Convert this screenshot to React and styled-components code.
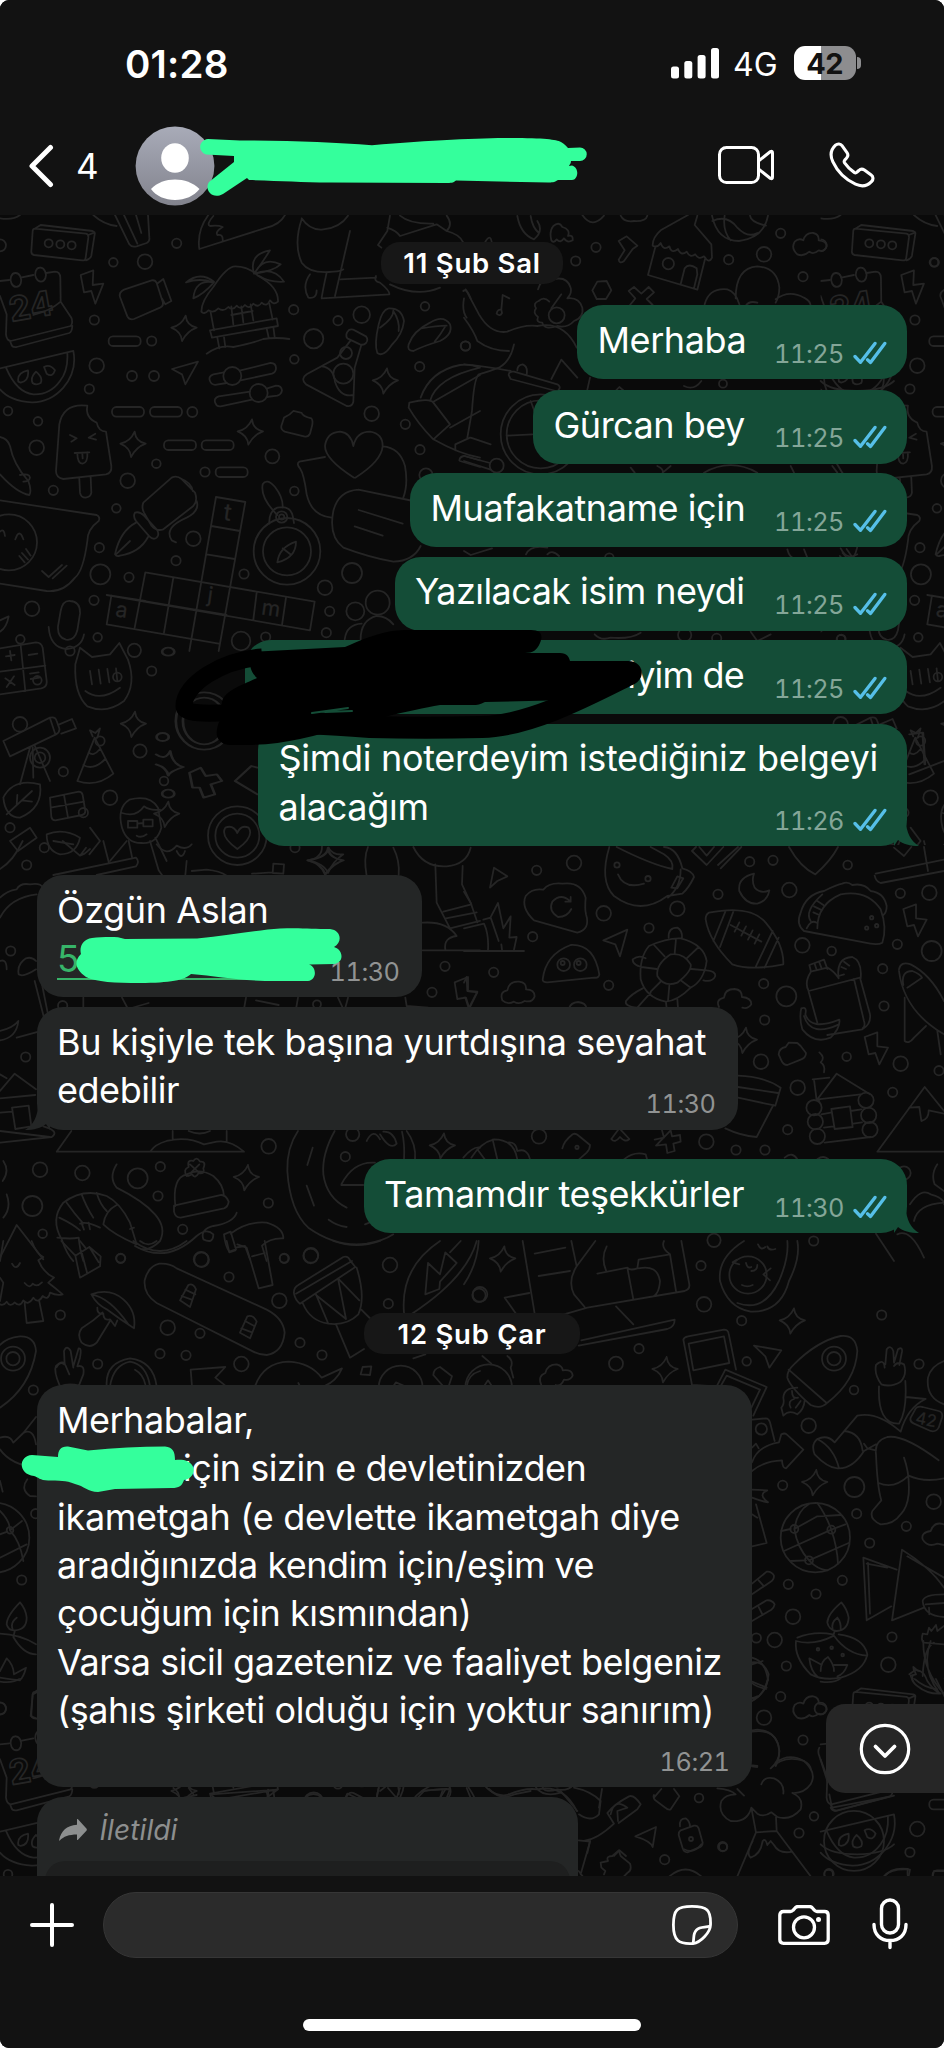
import React from 'react'

import styled, { createGlobalStyle, css } from 'styled-components'

const GREEN = '#34ff9c'

const GlobalStyle = createGlobalStyle`
    body {
        margin: 0;
        background: #fff;
    }
`

// Every zone holds doodles in thirds of a pixel, measured from its own corner
const zones = [
    {
        x: 0,
        y: 210,
        dots: [
            [340, 154, 13], [435, 152, 22], [530, 97, 14], [283, 327, 14], [455, 390, 14], [396, 495, 15], [462, 495, 15],
            [290, 464, 22], [268, 534, 14], [24, 600, 13], [114, 631, 13], [110, 710, 22], [577, 603, 15], [469, 758, 13],
            [383, 809, 22], [160, 838, 14], [615, 783, 14], [817, 736, 21], [883, 840, 13], [349, 892, 13], [580, 983, 22],
            [298, 1010, 14], [528, 1049, 14], [301, 1090, 30], [387, 1099, 14], [732, 1089, 14], [282, 1168, 14],
            [96, 1193, 22], [61, 1285, 13], [293, 1279, 13], [403, 1318, 20], [723, 1290, 28], [797, 1278, 14],
            [881, 296, 14], [1014, 329, 14], [1085, 311, 25], [941, 383, 29], [883, 445, 13], [1115, 608, 22],
            [1216, 640, 14], [1260, 716, 14], [1259, 467, 14], [1275, 286, 13], [1397, 405, 14], [1278, 792, 20],
            [975, 1130, 22], [1056, 1086, 30], [989, 1201, 14], [979, 1265, 14], [0, 103, 18],
            [146, 97, 12], [181, 100, 12], [215, 103, 12], [697, 495, 27], [776, 546, 27], [1038, 426, 18], [1030, 488, 30],
            [861, 1021, 100], [861, 1021, 72], [845, 918, 17], [845, 918, 8], [27, 994, 84], [1133, 1175, 36], [1066, 1201, 27],
        ],
        stars: [[552, 352], [399, 700], [751, 663], [1156, 510]],
        pills: [[326, 376], [336, 588], [450, 588], [492, 688], [605, 688], [647, 769]],
        paths: [
            // radio
            'M104 53 L258 68 Q266 70 265 80 L257 140 Q256 150 246 148 L102 132 Q93 130 94 120 L98 60 Q99 53 104 53 M104 53 L122 42 L278 60 Q286 62 284 70 L274 134 Q272 142 258 148 M265 72 L284 64',
            // racket and wing along the top edge
            'M280 12 Q310 40 350 45 M345 12 L388 100 Q395 110 410 106 L440 96 Q450 90 448 80 L444 12 M372 12 L412 98 M408 12 L424 66',
            'M855 12 Q840 40 800 50 L598 114 Q590 60 625 12 M640 15 Q618 40 630 45 Q655 42 668 48 Q645 62 652 72 Q670 68 668 90',
            'M0 22 Q40 28 60 12',
            // calendar
            'M0 210 L28 207 M62 200 L100 192 M138 186 L165 182 Q180 182 181 200 L182 272 L214 320 Q220 335 212 345 L32 390 Q20 388 18 370 L20 310 L0 255 M30 390 L34 400 Q36 410 50 408 L208 366 Q216 362 217 345 M182 272 Q150 300 100 312',
            'M46 186 a16 21 -8 1 0 1 0 M120 170 a16 21 -8 1 0 1 0',
            // bolt, camcorder
            'M242 192 L280 178 L278 222 L310 218 L286 278 L274 240 L252 244 Z',
            'M372 236 L455 208 Q466 206 470 216 L488 272 Q492 284 480 290 L402 324 Q388 328 382 316 L360 258 Q356 244 372 236 M474 216 L490 204 L514 270 L496 280 L486 262',
            // beach hut with palms
            'M604 302 Q604 270 640 228 Q680 166 706 166 Q745 166 775 195 Q836 228 834 272 Q820 284 810 268 Q800 290 785 275 Q775 292 760 278 Q748 296 735 282 Q722 298 710 284 Q698 300 685 288 Q670 304 655 292 Q640 308 625 298 Q612 312 604 302',
            'M632 304 L642 358 M694 286 L700 340 M808 278 L818 326 M630 358 L830 322 L834 345 L636 380 Z M652 380 L658 412 M672 378 L676 408 M800 352 L806 380 M820 348 L824 378 M620 428 Q660 400 700 408 Q760 396 790 384 Q830 378 868 384 M724 286 L730 334 M752 280 L760 328 M694 312 L758 300',
            'M642 212 Q600 180 558 214 Q600 200 640 214 Q585 205 580 262 Q610 250 642 214 M762 188 Q745 130 810 118 Q790 150 764 186 Q790 135 842 160 Q820 180 764 188 Q820 165 852 212 Q810 215 776 194',
            // watermelon
            'M0 472 L220 420 Q232 480 190 530 Q150 575 95 574 Q30 570 0 535 M18 470 Q50 545 100 550 Q150 552 180 510 Q205 478 202 426 M55 512 Q50 485 84 478 Q88 510 62 515 Z M98 516 Q90 500 108 482 Q130 500 122 516 Q108 524 98 516 M132 468 Q150 458 165 478 Q158 500 140 488 Z',
            // paper plane, sliders
            'M516 474 L594 452 L556 520 L546 490 Z',
            'M672 484 L640 490 Q624 496 630 510 Q636 524 650 521 L680 516 M722 478 L812 456 Q828 456 828 472 Q828 484 816 488 L722 508 M750 542 L656 556 Q640 562 646 576 Q650 588 662 586 L756 566 M802 532 L828 524 Q844 524 846 538 Q844 550 832 554 L800 558',
            // flask, slippers
            'M1046 358 Q1054 352 1064 358 L1098 376 Q1106 386 1098 396 Q1090 404 1080 400 L1042 382 Q1034 370 1046 358 M1052 388 L1012 440 L920 490 Q900 504 918 520 L1040 585 Q1056 588 1060 572 L1064 470 L1084 402 M966 466 Q1000 470 1005 512 Q1020 560 1060 552',
            'M1166 292 Q1205 290 1212 330 Q1208 370 1175 402 Q1150 440 1132 426 Q1122 400 1136 340 Q1146 296 1166 292 M1180 298 Q1182 320 1140 350 M1180 300 Q1200 330 1196 360 M1226 400 Q1240 360 1290 335 Q1330 310 1350 340 Q1360 370 1320 390 Q1270 405 1240 420 Q1220 420 1226 400 M1340 344 Q1310 345 1264 352 M1336 346 Q1322 370 1304 392',
            // ice lolly
            'M262 584 Q190 575 178 640 L168 780 Q168 800 190 804 L318 790 Q336 786 334 765 L318 662 Q296 662 290 635 Q255 620 262 584 M238 804 L240 845 Q242 860 257 860 Q272 858 274 845 L272 798 M210 672 L230 682 L214 692 M286 668 L266 680 L288 686 M224 726 L268 724 M232 726 Q232 758 248 758 Q264 755 262 724 M247 728 L248 742',
            // chilli
            'M0 678 Q22 682 30 705 Q40 760 85 810 Q96 840 88 852 Q50 845 0 790 M60 792 Q88 786 90 800 Q88 812 70 812',
            // cube
            'M852 620 Q870 612 880 600 L905 606 Q908 616 934 622 Q940 630 936 645 L930 668 Q924 680 912 676 L854 662 Q842 656 844 645 Z',
            // hearts and bubbles
            'M975 738 L898 752 Q888 758 900 772 Q912 790 920 850 Q935 915 995 920 M1062 800 Q975 745 975 705 Q980 665 1020 662 Q1052 665 1060 705 Q1070 662 1110 662 Q1148 668 1148 705 Q1145 750 1066 800 M1148 706 Q1200 710 1215 765 Q1225 820 1210 860',
            'M1075 836 L1240 870 M1075 836 Q1015 840 1000 900 Q985 975 1030 1010 Q1110 1040 1180 1052 Q1240 1050 1262 1005 M1076 897 L1208 938 M1064 946 L1148 974',
            // fountain pen
            'M430 875 L515 800 Q530 792 545 804 L585 845 Q594 870 580 885 L490 955 Q470 962 455 945 L432 905 Q424 890 430 875 M405 905 Q418 900 432 914 L470 955 Q480 970 470 980 Q460 988 448 976 L408 930 Q398 915 405 905 M408 935 Q360 960 345 1030 Q350 1038 360 1034 Q420 1024 444 978 M348 1030 L390 990 M545 804 Q575 815 578 840 M590 870 Q600 900 560 920 Q490 950 515 988 L528 994',
            // crossword
            'M648 858 L736 873 L656 1320 M648 858 L568 1320 M634 945 L720 960 M620 1030 L704 1044 M436 1084 L944 1172 L930 1258 L320 1152 M436 1084 L404 1250 M520 1100 L492 1265 M334 1154 L320 1240 L656 1298 M320 1240 L334 1154 L420 1168 M420 1168 L680 1212 M770 1145 L760 1226 M858 1160 L846 1242 M334 1154 L436 1170',
            // compass
            'M832 912 Q780 860 788 820 Q800 800 825 828 Q850 860 848 890 M808 938 Q806 900 832 890 Q875 880 880 925 L882 936 M832 1054 Q838 1008 888 992 Q888 1040 832 1054 M848 1012 L874 1032',
            // speech bubble with a laughing face
            'M0 868 L290 912 Q302 918 296 930 Q262 955 262 990 Q250 1080 225 1100 Q190 1145 140 1140 L0 1118 M0 962 Q12 950 15 975 M46 985 Q58 950 70 985 M58 1035 L74 1054 M66 1026 L84 1046 M78 1014 L92 1034 M126 1080 L146 1098 L186 1062 M158 1102 L200 1064',
            // microphone
            'M210 1170 Q242 1172 240 1208 L232 1258 Q224 1290 198 1286 Q172 1280 174 1246 L182 1200 Q188 1168 210 1170 M146 1248 Q150 1310 200 1314 Q245 1310 252 1270 M0 1228 L26 1216 Q20 1250 0 1262',
            // motor bike
            'M1228 575 Q1290 560 1300 575 L1350 640 L1300 685 Q1255 640 1226 590 Z M1262 560 Q1290 480 1380 462 Q1410 458 1440 470 M1290 570 Q1310 500 1440 470 M1300 572 L1440 492 M1350 650 L1440 600 M1300 685 Q1380 730 1440 740 M1378 748 Q1380 735 1395 735 L1440 748 M1380 750 L1440 768 M1366 718 L1366 700 L1410 680',
            // trainers at the top
            'M905 25 Q880 100 905 155 Q930 190 1000 182 Q1025 180 1030 175 M905 22 Q930 60 970 55 Q1020 50 1044 14 M1050 60 L1005 255 M1022 205 L1128 200 M980 185 Q970 230 965 260 M930 190 Q905 225 925 260 Q950 265 950 238 M965 262 L1168 250 Q1170 240 1140 215 Q1120 210 1128 195 M1170 14 L1162 60 L1134 102 L1144 110 M1162 50 Q1190 60 1200 75 L1310 40 L1340 60 Q1360 40 1340 14 M1200 14 Q1230 40 1300 38 M1340 60 Q1380 70 1390 95 M1170 220 Q1250 260 1320 230',
            // people
            'M1034 1285 Q1040 1240 1085 1238 M1082 1290 Q1080 1228 1130 1215 Q1160 1215 1180 1240 M1390 240 Q1400 230 1412 262 M1392 262 Q1385 300 1400 320',
        ],
        labels: [['24', 34, 332, 102, -10], ['t', 668, 926, 70, 8], ['a', 344, 1216, 64, 8], ['j', 620, 1172, 64, 8], ['m', 782, 1210, 64, 8]],
    },
    {
        x: 464,
        y: 210,
        dots: [
            [396, 109, 14], [335, 150, 14], [950, 67, 14], [794, 146, 14], [900, 130, 22], [1017, 197, 14], [777, 518, 12],
            [613, 158, 17], [278, 313, 24], [230, 670, 120], [230, 670, 102], [98, 764, 21], [4, 405, 14], [1412, 154, 13],
            [662, 1272, 20], [758, 1282, 14], [1132, 1284, 13], [436, 1040, 13], [1170, 500, 90],
        ],
        stars: [],
        pills: [],
        paths: [
            'M160 15 Q170 70 210 85 Q240 60 220 30 M200 15 Q205 50 225 66 M262 88 Q255 60 268 45 Q285 30 295 48 Q320 55 312 75 Q328 70 326 88 Q310 98 300 82 Q290 98 278 85 Q268 98 262 88',
            'M355 12 Q385 55 420 14 M470 14 Q480 35 510 30 Q545 32 550 14',
            'M464 90 L488 76 L520 104 L506 114 L480 150 Q466 160 464 146 L482 118 Z',
            'M60 100 Q80 60 84 100 M385 238 L400 212 L428 210 L442 238 L426 264 L398 264 Z',
            // shop
            'M672 12 L590 58 Q565 80 566 104 Q580 112 590 96 Q598 120 616 106 Q622 130 642 114 Q650 136 668 122 Q678 142 694 130 Q704 148 720 136 Q735 160 744 140 L742 100 L692 42 L700 14 M574 108 L552 192 L700 236 L724 140 M650 220 L662 172 Q675 155 698 172 L700 190 L690 232',
            // basketball
            'M744 14 Q760 90 825 90 Q900 80 912 14 M782 14 Q775 60 800 88 M745 30 Q790 10 820 50 Q850 82 880 66 M858 14 Q860 34 906 44',
            // clouds
            'M1000 130 Q980 112 992 92 Q1005 80 1018 88 Q1025 64 1048 66 Q1066 70 1064 88 Q1088 90 1088 106 Q1080 124 1064 118 Q1048 132 1036 122 Q1018 138 1000 130',
            'M722 280 Q735 230 790 235 Q815 242 826 280 M815 262 Q815 170 880 166 Q940 170 946 230 Q946 255 935 275 M935 265 Q975 235 1020 260 Q1040 270 1040 285 M845 285 Q855 268 880 275',
            'M494 240 L510 228 L532 248 L554 228 L570 244 L548 264 L566 282 M494 240 L514 262 L498 282',
            // pine cone and note
            'M222 235 Q230 200 270 204 Q310 196 320 230 Q325 245 310 262 Q345 258 355 290 Q360 320 330 330 Q310 352 280 345 Q240 358 235 335 Q215 335 222 318 Q205 305 216 292 Q206 276 224 270 Q240 255 256 272 M262 292 L292 250',
            'M112 296 L116 252 L136 262 M112 296 Q100 294 98 308 Q108 318 114 306 Z M5 235 L45 310 Q80 370 130 362 Q180 340 220 345 Q300 330 338 410 M0 320 Q30 360 40 390 Q80 420 135 420 M150 400 Q140 450 105 470 Q80 480 45 490 Q30 500 24 600 L10 680',
            'M134 490 Q136 480 150 482 L280 520 Q292 528 284 536 M134 492 L140 504 L276 540 M160 478 Q160 462 176 460 Q192 466 188 490 M262 504 L292 446 L340 500 M378 500 L370 536 M0 460 Q60 465 140 480 M20 680 L80 700 M0 735 L78 756 M0 750 L80 776 M128 674 L205 670 M200 570 L226 640 M0 1020 L20 1032 L84 1012',
            'M186 1030 Q200 1000 250 1010 M250 1030 Q265 1015 285 1035 M1070 510 Q1100 540 1180 540 Q1260 538 1290 510 M450 545 L466 528 L486 545 M660 525 Q690 540 712 510 M500 770 L512 785 M580 765 Q600 775 596 785 L620 765 M720 785 Q800 740 880 785 M980 765 L990 785 M1105 765 L1120 785 M392 1270 Q410 1290 440 1280 Q500 1285 530 1265 M860 1262 L880 1290 L920 1270',
            'M1130 1012 Q1150 1050 1180 1030 M970 1015 Q975 1035 985 1040 M1020 1015 L1030 1040',
        ],
        labels: [],
    },
    {
        x: 0,
        y: 640,
        dots: [
            [352, 108, 13], [112, 118, 13], [210, 30, 14], [300, 300, 14], [420, 330, 20], [60, 250, 22], [190, 392, 14],
            [250, 515, 14], [330, 470, 22], [30, 560, 14], [455, 90, 14], [492, 420, 13], [120, 350, 30], [120, 350, 16],
        ],
        stars: [[400, 250], [500, 520]],
        pills: [],
        paths: [
            // calculator
            'M0 22 L108 4 Q124 4 128 20 L140 120 Q142 138 124 142 L0 160 M0 92 L136 74 M62 12 L76 150 M18 46 L44 42 M30 30 L34 58 M86 42 L112 38 M16 112 L44 132 M42 106 L20 138 M90 98 L116 94 M92 114 L118 110',
            // cat shaped mug
            'M226 70 L240 20 L276 48 L330 40 L358 6 L384 56 Q410 130 372 180 Q320 220 262 196 Q222 160 226 70 M270 90 L276 130 M296 86 L302 128 M322 84 L328 124 M348 82 L352 120 M256 150 Q300 184 360 140',
            // telescope on a stand
            'M10 300 L150 230 Q166 226 170 240 L178 262 Q180 274 168 280 L30 346 Z M150 232 L166 280 M178 250 L216 234 L228 262 L184 278 M90 320 L60 430 M104 314 L150 420 M98 318 L100 410',
            // party hat and ribbon
            'M232 420 L284 290 L340 398 Q290 440 232 420 M250 372 Q280 390 316 354 M266 334 Q280 348 300 324 M278 286 L270 268 L286 276 L300 262 L292 290',
            // leaf and brick
            'M10 470 Q40 410 120 430 Q130 500 60 530 Q16 530 10 470 M20 520 L96 450 M50 492 L52 462 M66 478 L96 482',
            'M150 470 L236 452 Q246 452 248 462 L256 510 Q256 520 246 522 L166 538 Q156 538 154 528 Z M192 462 L204 530 M152 500 L252 482',
            // lad with glasses
            'M366 560 Q350 500 388 476 Q450 460 474 500 L484 560 Q470 610 424 606 Q380 606 366 560 M366 516 Q410 530 432 496 Q450 510 480 506 M384 540 h28 v20 h-28 Z M430 536 h28 v20 h-28 Z M412 548 L430 546 M410 584 Q424 592 440 580 M380 600 L330 660 M466 590 L500 660',
            'M30 600 L90 560 L110 590 L54 630 Z M140 580 Q190 560 240 590 Q230 640 180 640 Q140 630 140 580 M160 600 L220 610 M270 560 L300 600 L268 640',
        ],
        labels: [],
    },
    {
        x: 0,
        y: 840,
        dots: [
            [133, 20, 14], [80, 72, 14], [32, 330, 14], [77, 648, 14], [188, 494, 14], [120, 986, 22], [247, 996, 22],
            [97, 1095, 30], [128, 1178, 13], [413, 1012, 30], [481, 977, 14], [474, 1065, 14], [806, 916, 22], [805, 1086, 14],
            [548, 1165, 14], [1335, 376, 14], [1296, 454, 14], [951, 490, 12], [1036, 947, 14], [1058, 880, 20], [885, 20, 14],
            [603, 1255, 22], [852, 1252, 13], [932, 1245, 22], [362, 1252, 13], [712, -16, 88], [712, -16, 66],
        ],
        stars: [[1327, 915], [739, 1010]],
        pills: [],
        paths: [
            'M68 0 Q40 60 0 84 M160 102 L408 50 Q420 62 408 76 L290 102 M310 0 L326 62 M386 0 L396 48 M188 0 L240 44 L258 20 M240 44 L254 38 L270 24',
            'M450 0 L476 88 L486 102 M470 10 Q500 50 530 14 Q560 30 575 10 M530 30 Q545 60 555 30 M560 60 L556 102 M575 90 L620 86 Q660 90 680 104 M756 98 L816 94 M820 68 L852 70 L850 98 L818 96 Z M712 24 Q660 -14 676 -40 Q700 -50 712 -24 Q722 -50 746 -40 Q764 -14 712 24',
            'M922 58 Q968 52 966 14 M1030 40 Q1000 60 984 96 Q972 66 922 58 M985 20 Q1000 44 1030 40',
            'M0 170 Q20 150 50 145 Q60 125 90 130 Q120 124 130 140 M0 230 Q30 170 110 160 M0 360 Q20 352 20 385 M56 400 Q50 370 78 352 Q95 346 108 360 M56 400 Q70 410 108 385 M0 570 Q40 560 55 540 Q50 590 0 598 M50 590 L116 572 M104 420 L132 530 M124 420 L144 520',
            'M0 750 L44 698 L108 745 M0 772 L106 762 M36 800 L86 794 L94 856 L46 864 Z M0 815 L36 812 M0 870 L150 888 M0 700 L20 712 M0 905 L155 888 Q180 870 130 856 M20 1060 Q35 1100 10 1130 M10 960 Q30 990 8 1020',
            // boots and trees
            'M1104 18 Q1090 50 1100 105 M1180 20 Q1200 60 1196 102 M1240 18 Q1270 80 1340 76 Q1400 70 1412 20 M1306 70 L1310 185 L1350 262 L1440 240 M1388 75 L1386 130 L1414 190 L1330 212 M1338 232 L1430 214 M1268 245 Q1340 240 1370 285 Q1330 290 1336 326 M1268 328 L1440 328',
            'M1364 424 L1404 408 L1404 450 L1432 452 L1406 502 L1396 470 L1372 474 Z M250 470 L250 504 M366 470 L384 504 L446 486 M738 470 L732 504 M768 478 L836 492 M894 470 L888 504 M1014 470 L1028 500 M1036 500 L1044 470 M1216 470 L1220 495 L1284 500',
            'M214 870 L170 932 L732 932 Q690 895 650 902 L612 910 Q560 885 500 900 Q465 910 452 930 M518 870 L518 896 M680 870 L680 902 M566 870 Q600 885 630 870',
            // woolly hat, lamp cord
            'M526 1095 Q516 1010 560 1000 Q600 980 640 1005 Q670 1030 672 1065 M522 1094 L664 1062 Q678 1062 686 1082 Q684 1098 672 1102 L542 1130 Q526 1130 522 1112 Z M560 1005 Q548 985 566 978 Q560 955 580 960 Q590 945 600 962 Q620 960 610 982 Q616 1000 596 996 Q585 1015 576 1000 Q560 1010 560 1000 M570 970 L596 994 M598 970 L572 996',
            'M350 970 Q325 1010 350 1040 Q430 1080 465 1120 Q500 1160 480 1200 Q440 1240 405 1215 M710 1115 Q700 1145 640 1155 Q600 1165 610 1195 Q640 1210 640 1180 Q620 1160 590 1185 Q500 1270 405 1215',
            // shrimp
            'M185 1195 Q150 1135 190 1085 Q250 1040 320 1065 Q360 1085 390 1145 L410 1210 Q340 1180 310 1150 Q315 1110 350 1092 M245 1060 Q260 1100 280 1130 M290 1056 Q300 1090 320 1110 M200 1085 Q225 1120 250 1148 M178 1130 Q220 1150 240 1168 M172 1190 Q215 1195 236 1190 M240 1148 Q260 1140 300 1160 M236 1190 Q240 1230 250 1260 M185 1195 Q200 1240 220 1260 M252 1166 L246 1150 M270 1165 L266 1145 M390 1164 L402 1160',
            // hammer, road
            'M672 1180 L692 1172 L708 1225 L688 1232 Q676 1215 672 1180 M692 1178 Q740 1140 800 1145 Q850 1160 850 1192 Q810 1190 786 1214 L800 1260 M706 1220 L735 1215 L750 1255',
            'M894 870 Q860 920 862 990 Q870 1110 925 1160 Q1010 1220 1100 1208 Q1150 1200 1180 1180 M1004 870 Q965 940 970 1000 Q980 1070 1040 1100 M938 920 L922 972 M920 1034 L942 1094 M986 1136 Q1010 1154 1040 1158 M1095 1150 L1110 1144 M1024 1030 Q1060 960 1125 965 M1024 1032 L1090 1032 M1100 900 Q1120 860 1140 895 M1140 880 Q1170 930 1190 908 Q1180 870 1150 872 M1220 870 Q1250 910 1245 958 M1206 872 Q1215 910 1212 956 M1390 950 Q1420 915 1440 920',
            'M0 1250 L50 1152 L130 1255',
        ],
        labels: [],
    },
    {
        x: 464,
        y: 840,
        dots: [
            [330, 66, 22], [218, 88, 14], [419, 217, 22], [206, 287, 14], [89, 394, 14], [434, 433, 14], [555, 261, 14],
            [640, 203, 22], [762, 160, 14], [857, 62, 14], [927, 58, 14], [976, 147, 22], [1015, 313, 22], [899, 428, 14],
            [967, 466, 30], [902, 537, 14], [891, 662, 22], [1001, 740, 22], [971, 866, 14], [816, 927, 14], [903, 927, 14],
            [727, 902, 22], [225, 886, 22], [1309, 157, 14], [1396, 155, 22], [1300, 310, 14], [1403, 330, 30],
            [1256, 383, 14], [1260, 495, 14], [1310, 668, 22], [1286, 754, 14], [1425, 689, 14], [1103, 330, 13],
            [1148, 647, 13], [1151, 72, 13], [299, 371, 19], [349, 371, 19], [1050, 800, 23], [1054, 842, 23],
            [1060, 886, 23], [1206, 778, 23], [1214, 823, 23], [1218, 866, 23], [552, 113, 8], [459, 72, 8], [339, 919, 5],
            [1208, 261, 5], [1223, 230, 5], [1238, 254, 5], [1049, 1200, 14], [750, 1198, 20], [1320, 996, 20], [296, 366, 6], [344, 366, 6],
        ],
        stars: [[841, 598]],
        pills: [],
        paths: [
            'M90 80 L130 106 L100 120 L78 140 Z M418 298 L490 266 L468 346 L454 310 Z',
            'M210 238 Q170 200 185 165 Q205 140 238 146 Q255 124 295 128 Q350 120 365 170 Q362 205 366 220 Q380 265 340 275 Q270 255 210 238 M318 180 Q290 155 265 182 Q252 210 282 228 Q310 228 322 204 M304 182 L320 182 L320 168',
            // cup
            'M436 18 Q405 120 450 165 Q530 225 610 165 L655 158 Q675 140 690 108 Q686 90 655 82 Q640 20 600 18 M458 18 Q560 70 625 84 Q630 60 600 40 L560 18 M640 142 L658 112 L640 106 L622 140 Z M462 100 Q480 145 540 128 M612 170 Q650 140 650 85',
            'M684 30 L728 72 L778 18 M706 18 L728 44 L750 18 M762 72 L822 18 M770 82 L832 18 M684 30 L696 18 M975 18 Q1010 80 1054 100 Q1100 60 1122 18',
            'M870 98 Q820 110 826 150 Q845 190 880 188 Q910 180 916 148 Q890 160 872 140 Q862 120 870 98',
            // rugby ball
            'M735 215 Q860 190 905 245 Q960 310 958 370 Q860 390 805 370 Q735 300 725 235 Q725 220 735 215 M784 212 L748 300 M808 212 L768 318 M926 270 L874 380 M944 290 L902 380 M800 252 L892 302 M826 244 L812 272 M846 256 L832 284 M866 268 L852 296 M886 280 L872 308',
            // taco
            'M1060 262 Q1060 190 1130 160 Q1210 145 1250 205 Q1270 260 1255 305 Q1240 314 1200 304 L1020 270 Q995 250 1010 215 Q1025 160 1080 150 Q1120 130 1135 128 Q1150 120 1165 132 Q1200 125 1220 150 Q1260 155 1268 195 Q1268 215 1258 222 M1040 240 Q1020 210 1075 160 M1028 262 Q1040 235 1058 245 M1050 196 L1070 206 M1060 180 L1078 192 M1048 214 L1066 222',
            'M1318 204 L1356 190 L1356 232 L1388 236 L1362 286 L1350 252 L1330 256 Z M1202 588 L1240 574 L1240 616 L1272 620 L1246 670 L1234 636 L1214 640 Z',
            'M0 152 L20 185 L40 244 M0 262 L60 248 Q75 280 72 328 M58 236 L80 230 L104 300 M78 232 L102 186 L118 262 L140 226 L136 290 L158 288 L150 326 M0 330 L180 330 M112 310 L114 326',
            // ghost
            'M236 415 Q245 340 320 312 Q390 308 406 400 Q404 412 390 410 L250 424 Q235 424 236 415',
            'M115 478 Q106 452 130 448 Q135 420 165 422 Q188 424 186 445 Q212 445 212 466 Q205 486 182 480 Q165 492 150 482 Q130 492 115 478 M765 498 Q754 476 780 470 Q782 444 812 444 Q834 446 834 468 Q862 470 862 490 Q852 505 835 500 M315 502 Q320 485 342 483 Q366 486 368 502',
            'M0 425 L8 408 L10 450 L40 454 L16 502 L6 470 L0 470',
            // turtle
            'M555 315 Q610 290 650 292 Q720 310 728 360 Q720 420 680 440 Q640 480 605 482 Q545 470 530 415 Q525 350 555 315 M620 340 Q660 335 680 370 Q685 390 640 425 Q600 440 580 405 Q575 370 620 340 M636 294 L632 338 M704 318 L668 352 M728 388 L682 384 M680 440 L650 418 M612 480 L616 434 M560 452 L592 420 M532 378 L578 384 M570 312 L602 346 M614 290 Q612 260 640 260 Q655 268 654 290 M545 380 Q505 375 506 355 Q525 340 545 352 M728 388 Q755 390 754 405 Q745 425 718 418 M560 455 L520 500 Q480 495 486 480 Q500 460 536 442 M606 484 L608 502 M640 474 L642 502',
            // backpack
            'M1040 388 L1036 372 L1080 356 L1090 384 M1052 368 L1058 386 M1066 364 L1072 380 M1040 392 L1090 380 Q1110 390 1124 412 M1034 450 L1188 410 L1218 520 Q1222 550 1195 565 L1090 582 M1034 450 Q1020 425 1040 394 M1034 452 L1060 545 M1170 414 L1200 540 Q1205 555 1196 562 M1124 412 Q1115 350 1165 348 Q1195 360 1190 412 M1124 405 L1140 400 M1132 378 L1146 384 M1140 362 L1156 374',
            'M1012 502 Q1030 495 1024 520 Q1040 570 1126 536 Q1130 560 1100 590 Q1050 610 1015 565 Q1005 530 1012 502 M1020 525 Q1040 590 1125 550',
            // plane
            'M1305 385 Q1310 360 1340 370 Q1400 400 1440 480 M1305 390 Q1320 510 1440 580 M1318 432 Q1310 390 1345 390 Q1370 400 1374 410 L1330 440 M1322 470 L1322 600 Q1335 610 1350 590 L1386 555 M1420 570 L1430 640',
            'M944 640 Q945 622 965 618 L974 605 L1000 606 L1010 615 L1026 636 Q1026 650 1010 656 L970 672 Q958 672 952 658 Z M1066 634 Q1085 650 1070 664 Q1085 675 1080 694',
            // log cabin
            'M1046 715 L1096 710 M1050 716 L1058 778 L1118 698 L1218 760 M1062 775 L1190 760 M1102 804 L1158 796 L1166 858 L1112 864 Z M1072 820 L1100 815 M1160 810 L1192 805 M1080 860 L1108 856 M1168 848 L1194 844 M1082 905 L1220 888 M1058 772 L1066 780',
            'M822 704 Q900 706 950 740 L934 794 L822 770 M822 738 L942 756 M928 792 L878 888 Q830 884 784 862',
            'M1240 932 L1382 738 L1440 810 M1440 932 L1240 932 M1336 800 L1366 798 L1372 840 Q1395 835 1394 808 L1440 818',
            'M22 950 Q50 905 90 895 Q150 895 160 955 M86 896 L100 955 M130 905 Q155 900 160 930 Q190 920 198 955 M40 925 L62 955 M295 922 Q300 900 326 880 Q335 875 345 885 L378 912 Q378 925 368 935 L345 955 M442 894 L466 862 L496 894 Q484 906 468 888 Q452 908 442 894 M572 896 L600 890 L594 868 M620 868 L624 886 L648 882 L650 902 L628 908 L632 930 L610 936 L606 910 L576 914 Z M480 955 Q510 930 545 940 L550 958 M962 950 Q985 930 1000 955 M1060 955 Q1080 940 1096 958',
            'M1338 1090 Q1370 1040 1400 1060 Q1440 1070 1440 1090 M1350 1140 Q1360 1090 1440 1085 M1420 970 Q1400 1000 1412 1030 L1440 1050 M1300 1180 Q1340 1160 1380 1250 M1236 1178 L1290 1260',
            'M1235 98 L1440 56 M1232 104 Q1236 122 1250 126 L1440 90 M1380 18 L1392 90 M1290 20 L1320 45 L1342 18',
        ],
        labels: [],
    },
    {
        x: 0,
        y: 1240,
        dots: [
            [605, 56, 22], [687, 108, 14], [853, 52, 14], [933, 43, 22], [362, 52, 14], [838, 179, 22], [181, 222, 14],
            [503, 260, 22], [600, 277, 14], [480, 338, 14], [558, 343, 14], [724, 369, 22], [966, 342, 14], [900, 305, 14],
            [1165, 188, 14], [1170, 72, 22], [293, 369, 14], [100, 447, 14], [65, 1017, 14], [107, 818, 14], [39, 353, 36],
            [39, 353, 20], [1202, 440, 66], [1440, 160, 22], [30, 868, 10], [-17, 890, 105],
        ],
        stars: [],
        pills: [],
        paths: [
            // fir tree
            'M10 0 L0 60 M0 110 L10 125 L0 180 M95 0 Q110 40 130 48 L115 58 Q130 95 162 110 L145 125 Q165 140 188 160 Q170 165 150 155 Q145 180 128 165 Q115 190 100 170 Q85 196 70 178 Q60 200 44 184 Q30 200 20 182 Q10 196 0 190 M74 186 L80 246 L130 240 L118 182 M36 68 Q48 90 60 66 M74 126 Q90 145 98 128 Q110 140 126 124',
            // badminton, mushroom
            'M184 0 L226 44 L240 110 M226 44 L268 18 L302 46 L300 76 L240 110 M244 30 L262 98 M268 18 L296 64 M240 0 L256 20',
            'M274 160 Q330 140 370 175 Q410 210 402 262 Q360 235 320 205 Q290 190 274 160 M274 160 Q330 170 385 250 M292 200 Q290 220 310 218 Q310 240 330 235 L345 255 L352 238 M308 214 Q280 240 245 262 Q230 280 245 305 Q270 325 290 305 L330 240',
            'M400 0 Q480 60 560 0 M420 0 Q445 20 470 0 M680 0 L688 34 L706 28 M712 10 L740 20 L776 142 L818 132 L794 0 M756 46 L794 36 M1000 0 Q1070 25 1140 0',
            // snowboard
            'M478 68 Q510 66 530 82 L800 206 Q850 232 854 275 Q848 335 800 342 Q780 342 760 332 L470 186 Q430 160 434 118 Q445 75 478 68 M540 178 L565 132 Q580 125 588 145 L570 198 Z M545 165 L575 176 M556 146 L586 160 M720 275 L742 226 Q760 220 770 242 L750 292 Z M724 262 L756 274 M735 240 L764 256',
            // drum
            'M882 158 Q880 140 895 132 L1030 48 Q1044 44 1050 58 L1066 78 L900 188 Q886 178 882 158 M888 158 L1056 60 M908 186 Q930 240 985 248 Q1040 255 1075 220 Q1098 170 1070 80 M948 160 L984 246 M948 162 L1038 234 L1014 112 L1078 178 M1008 250 L1050 350 L1092 324 M1084 206 L1112 234',
            // surf board with a bolt
            'M1212 215 Q1200 80 1320 0 M1236 218 Q1400 110 1430 0 M1276 160 L1284 66 L1320 100 L1336 34 L1370 66 L1320 122 L1318 144 Z M1382 0 L1350 34 M1240 352 L1276 340',
            'M0 500 Q90 440 108 330 Q105 285 60 286 Q20 290 0 312',
            // hand
            'M180 436 Q160 390 168 375 Q190 355 196 372 L208 400 M170 378 Q180 360 192 370 M194 370 L192 330 Q200 310 212 330 L220 380 M220 376 L236 322 Q246 320 240 350 L232 376 Q255 370 250 400 Q240 425 236 436 M180 436 Q205 426 238 434',
            'M320 436 Q315 365 390 352 Q460 360 470 436 M330 436 Q340 372 390 362 Q440 370 450 436 M405 386 Q430 400 436 430 M576 436 L572 386 L676 378 L646 410 L676 434 M765 436 Q790 365 866 362 Q930 365 965 410 M965 410 L1026 382 Q1010 420 972 436 M895 426 L900 436 M1088 378 L1114 376 L1110 402 L1082 400 Z M1180 436 L1188 424 L1210 434 M1300 402 Q1300 384 1320 378 L1356 406 L1346 436 M1300 402 L1330 436 M1400 436 Q1405 400 1440 390',
            'M108 528 L70 576 Q100 560 108 610 M0 590 Q30 580 40 605 L70 576 M0 625 Q30 670 108 680 M0 720 L8 752',
            'M82 715 Q60 745 90 765 L108 766 M0 810 Q30 840 30 868 Q60 900 70 960 M30 868 L66 840 M0 880 L22 872 M0 950 L80 910',
            'M60 1084 Q20 1125 20 1150 Q25 1170 45 1168 Q80 1165 80 1130 Q78 1105 60 1084 M50 1130 Q30 1145 38 1165 M45 1168 L40 1188 Q70 1240 108 1240 M0 1178 Q60 1180 108 1210 M0 1290 L20 1252 Q40 1270 42 1300 L78 1280 Q70 1310 60 1316 M0 1310 Q40 1316 60 1318',
        ],
        labels: [],
    },
    {
        x: 464,
        y: 1240,
        dots: [
            [45, 163, 20], [711, 74, 14], [720, 190, 22], [833, 239, 14], [525, 323, 14], [456, 368, 21], [848, 361, 13],
            [1170, 447, 13], [1253, 222, 14], [1034, 554, 22], [956, 733, 14], [1171, 738, 30], [1178, 818, 14],
            [1409, 782, 22], [1327, 856, 14], [1217, 906, 14], [973, 1030, 14], [1056, 1059, 14], [1135, 1018, 14],
            [987, 1127, 22], [932, 1197, 22], [877, 1191, 14], [967, 1275, 14], [1273, 1271, 22], [1284, 1188, 14],
            [1365, 369, 14], [852, 102, 56], [1110, 353, 36], [1110, 353, 20], [892, 564, 17], [1054, 890, 104],
            [991, 864, 12], [1102, 866, 12], [1035, 958, 12], [1062, 1225, 4], [1103, 1220, 4], [1136, 1242, 4], [74, 440, 70],
        ],
        stars: [[116, 54], [985, 240], [603, 386], [1052, 725]],
        pills: [],
        paths: [
            'M176 0 L212 218 M122 170 L196 156 M122 170 L156 218 M212 38 L304 20 M224 105 L318 90 M322 0 L338 76 M394 0 L338 76 Q310 120 330 160 L362 198 M428 16 Q410 50 426 88 M400 98 L490 80 Q498 90 520 82 L524 56 L618 40 Q590 20 600 0 M490 80 L508 175 M524 82 Q580 70 588 120 Q585 165 560 168 M618 40 L636 150 M652 0 L676 130 Q678 145 662 150 L370 200 L300 220 M352 298 L632 236 Q632 258 610 264 L344 314 M456 196 L508 250 M44 0 Q40 70 0 130',
            // avocado
            'M840 0 Q760 50 768 120 Q790 200 860 212 Q950 215 975 120 Q1010 50 1000 0 M820 186 Q900 215 945 120 Q975 50 970 0 M818 56 L806 64 L826 70 M920 82 L898 100 L918 118 M846 66 Q850 84 862 78 M862 90 Q880 90 880 72 M834 132 Q850 140 866 132 M882 10 Q890 30 904 18 M910 16 Q915 30 934 24',
            'M130 345 Q150 360 140 380 L148 410 M55 345 L82 368 M60 436 L72 418 L84 436',
            'M232 432 Q220 405 244 396 Q250 370 278 370 Q296 375 296 388 Q325 384 326 404 Q318 420 300 416 Q290 438 275 432',
            // polaroids
            'M672 286 L780 266 Q792 266 794 278 L816 386 M658 296 Q660 288 672 286 M658 296 L684 432 L758 436 M674 308 L780 286 L796 366 L688 388 Z M758 436 L784 386 L908 438 L868 524 M772 432 L788 404 L888 446 L862 500 M864 536 L906 532 Q914 532 918 544 L932 600 M864 620 L876 608 L884 622',
            'M870 314 L952 328 L916 380 L904 346 Z',
            // rocket
            'M1130 285 Q1175 280 1180 330 Q1175 420 1090 485 Q1070 506 1040 492 Q980 440 970 410 Q968 390 990 370 Q1060 300 1130 285 M974 386 L1088 486 M1000 440 Q960 440 958 470 Q962 490 952 500 L958 524 Q975 505 1000 520 Q1020 505 1022 478 M980 500 Q970 480 990 474 M995 500 L1010 480 M984 450 Q984 475 1002 470',
            // arrow
            'M864 664 Q880 615 945 604 L952 580 Q962 575 968 580 L1018 626 L966 682 Q955 682 954 658 Q900 660 864 690 M864 746 L910 748 Q880 760 912 784 Q890 780 864 770 M876 790 L908 906 L864 916 M864 820 L880 830',
            // runner
            'M1245 436 Q1240 550 1305 548 Q1330 510 1324 420 M1236 372 Q1230 400 1252 430 Q1280 440 1310 422 Q1330 400 1320 370 Q1300 360 1290 375 M1236 372 Q1260 350 1262 380 M1264 370 L1268 325 Q1280 310 1288 330 L1290 365 M1290 365 L1302 325 Q1316 316 1314 332 L1306 372 M1310 572 Q1240 510 1180 524 L1112 604 Q1090 580 1060 594 Q1040 610 1052 640 Q1090 680 1120 682 Q1165 685 1200 630 L1236 610 M1060 594 Q1110 620 1125 682 M1142 570 Q1190 575 1196 630 M1200 608 L1210 622 L1236 628 M1424 658 Q1320 580 1270 588 Q1230 600 1236 640 Q1240 740 1252 778 L1225 810 Q1215 835 1250 850 Q1290 850 1310 820 Q1330 800 1334 760 Q1338 700 1320 650 M1244 726 Q1290 746 1334 704 Q1380 725 1440 712 M1310 572 Q1330 500 1385 474 L1326 468 M1440 490 Q1385 470 1392 410 Q1400 375 1440 360 M1340 530 L1352 508 Q1358 494 1376 498 L1424 510 Q1438 514 1434 530 L1424 560 Q1416 574 1400 570 L1350 548 Q1336 542 1340 530',
            'M1060 786 Q1085 820 1102 866 Q1120 920 1122 968 M1034 790 Q1000 810 991 864 M991 864 Q1000 920 1035 958 Q1060 985 1090 988 M991 864 L1060 826 L1130 822 M960 930 L1102 866 L1144 850 M1035 958 L1154 906 M952 870 L980 864 M980 960 L1026 958',
            'M864 1028 L908 992 Q922 990 930 1004 Q930 1016 920 1022 L864 1060 M884 1018 L900 1036 M864 1104 L908 1078 Q924 1076 932 1090 Q930 1100 922 1106 L864 1140 M884 1098 L896 1122',
            // diya lamp
            'M1132 1084 Q1090 1120 1090 1145 Q1095 1168 1118 1170 Q1152 1168 1154 1130 Q1150 1105 1132 1084 M1120 1130 Q1100 1145 1106 1165 M1120 1130 Q1132 1145 1130 1166 M1112 1170 L1108 1184 M1000 1190 Q1050 1170 1106 1180 M1124 1180 Q1200 1190 1210 1240 Q1200 1290 1130 1310 Q1080 1320 1040 1300 Q990 1250 996 1200 Q1050 1215 1110 1184 Q1150 1240 1210 1244 M1070 1290 Q1070 1260 1092 1248 Q1110 1270 1110 1290 M1070 1270 L1036 1252 Q1040 1290 1060 1306 M1110 1272 L1150 1272 Q1140 1300 1120 1306',
            // paper sheets
            'M1198 950 L1208 1138 L1282 1096 M1198 950 L1298 986 M1212 966 L1218 1118 M1208 968 L1270 980 M1314 926 L1284 1138 L1380 1100 M1314 926 Q1400 980 1440 1040 M1330 946 L1440 1010 M1440 1060 Q1380 1060 1376 1080 Q1380 1125 1440 1128 M1385 1090 L1440 1086 M1395 1100 L1396 1120 M1440 850 Q1410 840 1400 870 Q1370 875 1376 895 Q1390 920 1420 908 L1440 912',
            'M1440 1155 L1420 1170 L1416 1152 L1402 1170 L1395 1160 L1390 1180 L1376 1178 Q1370 1200 1380 1205 L1440 1210 M1376 1305 Q1380 1220 1410 1205 M1346 1320 L1340 1304 L1356 1300 L1350 1286 L1366 1290 M864 1250 Q905 1260 912 1318',
        ],
        labels: [['42', 1352, 546, 50, 12]],
    },
    {
        x: 464,
        y: 1640,
        dots: [[1050, 526, 13], [1005, 576, 14], [705, 471, 13], [776, 617, 14], [602, 656, 14], [681, 594, 6], [1095, 698, 14]],
        stars: [],
        pills: [],
        paths: [
            'M864 64 Q900 60 914 100 Q905 160 864 180 M864 122 L908 140 M864 70 L896 60 M1400 0 Q1370 80 1425 155 M1378 0 Q1376 90 1440 158 M1336 100 L1350 90 L1348 78 L1360 88 Q1380 90 1390 120 Q1410 150 1430 158 Q1390 160 1360 135 Q1340 120 1346 104',
            // tree
            'M864 272 Q940 260 946 330 Q946 360 920 382 M864 376 L880 378 M920 382 Q960 340 1020 360 Q1060 395 1040 430 Q1020 458 985 456 Q1020 470 1010 505 Q980 540 940 528 L922 514 Q900 530 880 518 L862 500 Q850 545 800 540 Q760 520 772 480 Q785 460 815 460 Q800 445 760 442 M892 430 Q900 405 930 412 Q962 425 958 458 M820 444 L840 464 M862 500 L876 574 L820 706 M936 528 L938 570 L1040 706 M876 574 L938 570 M866 600 Q845 640 860 650 Q890 640 896 600 Q905 590 910 612 L920 600 L930 612 Q945 640 984 632',
            // pencil and bits
            'M290 450 L340 510 M330 440 Q380 450 410 480 L405 520 Q380 545 345 520 M75 444 Q110 480 150 460 L200 450 M216 440 Q240 470 290 455 M414 444 L405 500 M360 600 Q400 595 450 548 L430 516 Q450 490 495 466 Q510 460 530 490 L520 505 L464 546 M344 598 L378 602 L350 700 M440 520 Q450 470 490 500 L460 510 L462 540 M344 690 L356 706',
            'M514 586 L576 558 L566 618 Q560 600 514 586 M648 556 Q645 532 665 532 Q678 540 678 558 M650 568 L690 554 Q700 552 704 562 L716 605 Q716 616 704 620 L670 634 Q660 634 656 622 L644 582 Q644 572 650 568',
            'M570 470 L592 444 M630 444 L646 466 L620 505 Q612 508 604 500 L574 478 Q566 470 570 462 M412 680 L410 665 L432 660 Q425 645 445 645 L464 628 L470 645 L498 668 Q505 688 490 696 L480 706 M412 680 L424 690 L420 700 M616 706 Q665 665 712 706 M1260 706 Q1280 682 1338 686 L1334 706 M1406 706 L1410 690 L1440 690',
            'M1066 320 Q1060 330 1066 345 L1090 420 M1096 460 L1104 500 L1280 466 M1100 500 Q1106 510 1116 510 L1290 464',
        ],
        labels: [],
    },
    {
        x: 0,
        y: 1640,
        dots: [[0, 202, 18]],
        stars: [],
        pills: [],
        paths: ['M108 155 L98 160 L92 225 L108 232 M520 441 Q540 455 536 471 M552 470 L590 462 M566 441 L580 460 M632 460 L832 446 L800 470 M632 460 L644 471 M804 446 L806 471 M916 470 Q940 448 966 470 M1036 471 L1042 458 L1070 471 M1130 471 L1136 441 M1164 441 L1190 471 L1200 441 M1252 471 L1274 448 L1350 444 L1340 471 M1328 448 L1320 471 M1400 441 L1412 471'],
        labels: [],
    },
]

const Doodles = () => (
    <g fill="none" stroke="#252525" strokeWidth="5.4" strokeLinecap="round" strokeLinejoin="round">
        {zones.map((zone, i) => (
            <g key={i} transform={`translate(${zone.x} ${zone.y}) scale(0.33333)`}>
                {zone.dots.map(([cx, cy, r], n) => <circle key={n} cx={cx} cy={cy} r={r} />)}
                {zone.pills.map(([x, y], n) => <rect key={n} x={x} y={y} width="96" height="29" rx="13" />)}
                {zone.stars.map(([x, y], n) => (
                    <path key={n} transform={`translate(${x} ${y})`} d="M5 -38 Q8 -8 38 -2 Q10 8 -6 38 Q-8 10 -38 -2 Q-8 -8 5 -38" />
                ))}
                {zone.paths.map((d, n) => <path key={n} d={d} />)}
                {zone.labels.map(([label, x, y, size, angle]) => (
                    <text
                        key={label}
                        transform={`translate(${x} ${y}) rotate(${angle})`}
                        fontFamily="Inter, sans-serif"
                        fontSize={size}
                        fontWeight={size > 90 ? 700 : 400}
                        strokeWidth={size > 90 ? 5 : 1}
                        fill={size > 90 ? 'none' : '#252525'}
                    >
                        {label}
                    </text>
                ))}
            </g>
        ))}
        {/* strip beside the outgoing bubbles */}
        <g transform="translate(150 600) scale(0.50643 0.33333)">
            <path d="M12 460 Q30 480 40 450 Q44 490 66 498 Q40 510 36 524 Q34 500 12 490 M78 515 L100 500 L110 525 L132 520 L142 540 L120 550 L128 580 L106 590 L98 560 L84 560 Z M168 540 L200 495 L212 500 M168 540 L212 580" />
            <path d="M312 778 Q350 770 352 740 Q352 770 382 778 Q360 790 346 820 Q340 790 312 778" />
            <ellipse cx="107" cy="360" rx="56" ry="86" /><ellipse cx="107" cy="360" rx="42" ry="70" />
            <path d="M1500 400 L1526 395 L1530 490 M1500 520 L1568 480" />
            <circle cx="36" cy="578" r="12" /><circle cx="25" cy="408" r="12" /><circle cx="36" cy="152" r="12" />
        </g>
    </g>
)

const Wallpaper = () => (
    <WallpaperSvg viewBox="0 214 944 1662" aria-hidden="true">
        <defs>
            <g id="doodles"><Doodles /></g>
            <clipPath id="leftStrip"><rect x="0" y="214" width="124" height="630" /></clipPath>
            <clipPath id="topStrip"><rect x="0" y="214" width="944" height="199" /></clipPath>
        </defs>
        <use href="#doodles" />
        <g transform="translate(820.6 0)"><g clipPath="url(#leftStrip)"><use href="#doodles" /></g></g>
        <g transform="translate(0 1463.3)">
            <g clipPath="url(#topStrip)">
                <use href="#doodles" />
                <g transform="translate(820.6 0)"><use href="#doodles" /></g>
            </g>
        </g>
    </WallpaperSvg>
)

const DoubleCheck = () => (
    <svg width="34" height="24" viewBox="0 0 34 24" fill="none" stroke="#56bfe8" strokeWidth="3.3" strokeLinecap="round" strokeLinejoin="round">
        <path d="M2 15.5 L7.5 21.3 L22 2.4" />
        <path d="M14.5 18.8 L17.5 21.5 L31.8 2.4" />
    </svg>
)

const Tail = ({ out }) => (
    <TailSvg $out={out} width="26" height="26" viewBox="0 0 26 26">
        <path d="M12 0 C12 13 17 21 25 26 C16 26 9 24 4 20 L0 26 L0 0 Z" fill={out ? '#144d37' : '#242626'} />
    </TailSvg>
)

const Message = ({ out, width, lines, time, ownLine, tail, gap = 0, children }) => {
    const head = ownLine ? lines : lines.slice(0, -1)
    const last = ownLine ? null : lines[lines.length - 1]

    return (
        <Bubble $out={out} $width={width} $gap={gap}>
            {head.map((line, i) => <Line key={i} $ls={line.ls}>{line.text}</Line>)}
            <LastRow $short={ownLine}>
                {last ? <Line $ls={last.ls}>{last.text}</Line> : <span />}
                <Meta $out={out}>
                    {time}
                    {out && <DoubleCheck />}
                </Meta>
            </LastRow>
            {tail && <Tail out={out} />}
            {children}
        </Bubble>
    )
}

const App = () => (
    <Page>
        <GlobalStyle />
        <Screen>
            <Header>
                <StatusBar>
                    <Clock>01:28</Clock>
                    <StatusIcons>
                        <svg width="48" height="31" viewBox="0 0 48 31" fill="#fff">
                            <rect x="0" y="18.5" width="8" height="12" rx="2.5" />
                            <rect x="13.3" y="13" width="8" height="17.5" rx="2.5" />
                            <rect x="26.6" y="7" width="8" height="23.5" rx="2.5" />
                            <rect x="40" y="0" width="8" height="30.5" rx="2.5" />
                        </svg>
                        <Network>4G</Network>
                        <Battery><span>42</span></Battery>
                        <BatteryCap />
                    </StatusIcons>
                </StatusBar>
                <NavBar>
                    <svg width="26" height="44" viewBox="0 0 26 44" fill="none" stroke="#fff" strokeWidth="5" strokeLinecap="round" strokeLinejoin="round">
                        <path d="M22.5 3.5 L4 22 L22.5 40.5" />
                    </svg>
                    <Unread>4</Unread>
                    <Avatar>
                        <svg width="80" height="80" viewBox="0 0 80 80">
                            <defs>
                                <linearGradient id="avatar" x1="0" y1="0" x2="0" y2="1">
                                    <stop offset="0" stopColor="#a8abb8" />
                                    <stop offset="1" stopColor="#82838d" />
                                </linearGradient>
                            </defs>
                            <circle cx="40" cy="40" r="39.4" fill="url(#avatar)" />
                            <ellipse cx="40" cy="32" rx="13.8" ry="14.8" fill="#fff" />
                            <path d="M16 63 C22 56.500 31 53.500 40 53.500 C49 53.500 58 56.500 64.500 63 C59 70 50 74 40 74 C30 74 21 70 16 63 Z" fill="#fff" />
                        </svg>
                    </Avatar>
                    <NameMark viewBox="200 136 388 62">
                        <path
                            fill={GREEN}
                            d="M208 139 L240 140.500 C290 140.500 335 142.500 372 145.300 C430 140 480 138 510 138 C545 138 556 139.500 561 142 C565 144 567 147 568 148 L580 147.500 A6.700 6.700 0 0 1 580 161 L571 161 C571 164 569 165 569 166 L572 165.500 C580 168 578 180 572 180 L558 180 C554 182.500 552 182.500 548 182.500 L456 180.500 C453 183 451 183 446 183 L330 182.500 C300 182 280 181 249 180 L247 178 L223 194 C212 200 204 190 209 182 L234 162 L234 156 L206 154.500 C197 151 199 140 208 139 Z"
                        />
                    </NameMark>
                    <VideoIcon width="56" height="38" viewBox="0 0 56 38">
                        <rect x="1.500" y="1.500" width="39" height="35" rx="7" />
                        <path d="M40.500 15 L52.500 5.500 Q54.500 4.500 54.500 7 V31 Q54.500 33.500 52.500 32.500 L40.500 23" />
                    </VideoIcon>
                    <PhoneIcon width="46" height="46" viewBox="0 0 46 46">
                        <path d="M6.500 3.200 C8.500 1.400 11.500 1.600 13 3.700 L18 10.600 C19.300 12.500 19 14.600 17.400 16.300 L15.700 18.100 C15 19 15 19.900 15.600 20.900 C18.400 25 21.200 27.800 25.200 30.400 C26.200 31 27.100 31 28 30.200 L29.800 28.500 C31.400 26.900 33.500 26.700 35.400 28 L42.200 33 C44.400 34.600 44.500 37.500 42.700 39.400 C38.500 43.900 33.800 45.500 26.500 42.200 C16.500 37.500 8.400 29.500 3.800 19.600 C0.500 12.500 2 7.400 6.500 3.200 Z" />
                    </PhoneIcon>
                </NavBar>
            </Header>

            <Chat>
                <Wallpaper />
                <DatePill $width={182} $top={27.5}>11 Şub Sal</DatePill>
                <Message out width={330} gap={21.5} time="11:25" lines={[{ text: 'Merhaba', ls: -0.42 }]} />
                <Message out width={374} gap={11} time="11:25" lines={[{ text: 'Gürcan bey', ls: -0.5 }]} />
                <Message out width={497} gap={9.5} time="11:25" lines={[{ text: 'Muafakatname için', ls: -0.43 }]} />
                <Message out width={512.5} gap={9.5} time="11:25" lines={[{ text: 'Yazılacak isim neydi', ls: -0.56 }]} />
                <Message out width={662} gap={9.5} time="11:25" lines={[{ text: <Pushed>siyim de</Pushed>, ls: -0.8 }]}>
                    <InkMark viewBox="170 620 480 130">
                        <path d="M251 652 L345 647 C375 634 388 630 408 630 L531 630 C542 630 543 636 540 643 C537 650 533 653 525 653 L560 653 C567 653 569 657 570 661 L628 661 C646 661 646 683 630 685 L570 700 L485 702 C480 704.500 478 705 472 705 L440 705 C410 710 365 722 320 732 L300 738 L235 745 C212 745 216 730 219 722 L225 716 L222 706 C220 692 240 686 257 678 C250 671 249 666 251 652 Z" />
                        <path d="M262 657 C222 660 184 684 184 706 C184 716 215 713 250 712" fill="none" stroke="#000" strokeWidth="17" />
                        <path d="M240 724 C300 722 330 724 370 727 C410 728 440 728 482 727 C530 726 590 694 628 675" fill="none" stroke="#000" strokeWidth="22" strokeLinecap="round" />
                        <path d="M228 734 C262 736 290 732 325 722" fill="none" stroke="#000" strokeWidth="21" strokeLinecap="round" />
                        <path d="M312 713 L348 708 M325 712 L352 711" fill="none" stroke="#144d37" strokeWidth="2" strokeLinecap="round" />
                    </InkMark>
                </Message>
                <Message
                    out
                    tail
                    width={649}
                    gap={9.7}
                    time="11:26"
                    lines={[{ text: 'Şimdi noterdeyim istediğiniz belgeyi', ls: -0.3 }, { text: 'alacağım', ls: -0.3 }]}
                />
                <Message
                    width={385.5}
                    gap={28.9}
                    time="11:30"
                    lines={[{ text: 'Özgün Aslan', ls: -0.4 }, { text: <PhoneLink>5</PhoneLink>, ls: 0 }]}
                >
                    <NumberMark viewBox="74 926 270 60">
                        <path
                            fill={GREEN}
                            d="M92 938 C100 937 110 937 118 937.200 L125 939 L197 938.500 C230 935 258 930 280 928.500 C300 927.500 312 929 330 929 C341 930 343 942 334 947 C344 950 344 963 334 964 L309 964.500 C317 967 317 980 308 981 L265 981 C235 980 215 976 191 974 C185 980 170 983 140 983 C115 983 96 982 86 977 C76 970 73 962 81 954 C79 947 83 939 92 938 Z"
                        />
                    </NumberMark>
                </Message>
                <Message
                    tail
                    width={701.5}
                    gap={10.2}
                    time="11:30"
                    lines={[{ text: 'Bu kişiyle tek başına yurtdışına seyahat', ls: -0.41 }, { text: 'edebilir', ls: -0.46 }]}
                />
                <Message out tail width={543.5} gap={29.3} time="11:30" lines={[{ text: 'Tamamdır teşekkürler', ls: -0.45 }]} />
                <DatePill $width={216} $top={80}>12 Şub Çar</DatePill>
                <Message
                    ownLine
                    width={715.5}
                    gap={30.9}
                    time="16:21"
                    lines={[
                        { text: 'Merhabalar,', ls: -0.5 },
                        { text: <AfterMark>için sizin e devletinizden</AfterMark>, ls: -0.44 },
                        { text: 'ikametgah (e devlette ikametgah diye', ls: -0.3 },
                        { text: 'aradığınızda kendim için/eşim ve', ls: -0.53 },
                        { text: 'çocuğum için kısmından)', ls: -0.42 },
                        { text: 'Varsa sicil gazeteniz ve faaliyet belgeniz', ls: -0.49 },
                        { text: '(şahıs şirketi olduğu için yoktur sanırım)', ls: -0.42 },
                    ]}
                >
                    <ChildMark viewBox="20 1444 176 50">
                        <path
                            fill={GREEN}
                            d="M32 1455 L58 1457 C58 1450 61 1446 68 1446.500 L88 1450.500 C115 1448 140 1446.500 165 1446.500 C173 1447 175 1452 175 1460 C184 1459 189 1461 192 1465 C196 1470 193 1479 184 1480 C182 1486 179 1488 172 1488 L115 1489 L98 1492 C88 1492 84 1486 75 1484 C65 1480 60 1481 48 1480.500 C40 1480.500 38 1477 34 1476 C18 1474 18 1456 32 1455 Z"
                        />
                    </ChildMark>
                </Message>
                <ForwardedBubble>
                    <ForwardedLabel>
                        <svg width="28" height="22" viewBox="0 0 28 22" fill="#8d8f8f">
                            <path d="M18 0.500 Q18 -0.500 19 0.300 L27.400 9.600 Q28.300 10.700 27.400 11.800 L19 20.800 Q18 21.500 18 20.500 L18 15.500 C10 15.500 4.500 17.500 0.800 21.500 Q0 22 0.200 20.800 C2 12 7.500 6.500 18 5.700 Z" />
                        </svg>
                        İletildi
                    </ForwardedLabel>
                    <ForwardedCard />
                </ForwardedBubble>
                <JumpButton>
                    <svg width="52" height="52" viewBox="0 0 52 52" fill="none" stroke="#fff" strokeWidth="3.2" strokeLinecap="round" strokeLinejoin="round">
                        <circle cx="26" cy="26" r="23.700" />
                        <path d="M16.500 23.500 L26 33 L35.500 23.500" strokeWidth="3.800" />
                    </svg>
                </JumpButton>
            </Chat>

            <Footer>
                <Composer>
                    <svg width="44" height="44" viewBox="0 0 44 44" stroke="#fff" strokeWidth="4" strokeLinecap="round">
                        <path d="M22 2 V42 M2 22 H42" />
                    </svg>
                    <Field>
                        <svg width="40" height="40" viewBox="0 0 40 40" fill="none" stroke="#fff" strokeWidth="2.800" strokeLinejoin="round">
                            <path d="M21 38.500 C7 39.300 1.400 36 1.400 20 C1.400 5 5 1.400 20 1.400 C35 1.400 39.100 5 38.500 20 C38.300 27 29 37.600 21 38.500 Z" />
                            <path d="M21 38.500 C22.500 33 20.500 29 24.500 25 C28.500 21 33 23 38.500 21" />
                        </svg>
                    </Field>
                    <CameraIcon width="52" height="40" viewBox="0 0 52 40">
                        <path d="M5.500 6.500 H12.500 Q14 6.500 15 5.300 L17.500 2.500 Q18.600 1.500 20 1.500 H31.500 Q33 1.500 34 2.500 L36.500 5.300 Q37.500 6.500 39 6.500 H46.500 Q50.200 6.500 50.200 10 V34.500 Q50.200 38.300 46.500 38.300 H5.500 Q1.800 38.300 1.800 34.500 V10 Q1.800 6.500 5.500 6.500 Z" />
                        <circle cx="26" cy="22.300" r="10.500" />
                        <circle cx="40.500" cy="14.500" r="2.500" fill="#fff" stroke="none" />
                    </CameraIcon>
                    <MicIcon width="36" height="52" viewBox="0 0 36 52">
                        <rect x="9.500" y="2" width="17" height="33" rx="8.500" />
                        <path d="M2 26.500 C2 37 9 42.500 18 42.500 C27 42.500 34 37 34 26.500 M18 42.500 V49.500" />
                    </MicIcon>
                </Composer>
                <HomeIndicator />
            </Footer>
        </Screen>
    </Page>
)

export default App

const Page = styled.div`
    width: 944px;
    height: 2048px;
    background: #fff;
`

const Screen = styled.main`
    display: flex;
    flex-direction: column;
    width: 944px;
    height: 2048px;
    border-radius: 9px;
    overflow: hidden;
    background: #0a0a0a;
    color: #fff;
    font-family: Inter, 'Liberation Sans', sans-serif;
`

const Header = styled.header`
    height: 214.5px;
    flex: none;
    background: #121212;
`

const StatusBar = styled.div`
    display: flex;
    justify-content: space-between;
    align-items: flex-start;
    height: 125px;
    padding: 0 83px 0 125px;
    box-sizing: border-box;
`

const Clock = styled.div`
    margin-top: 41px;
    font-size: 38.5px;
    font-weight: 600;
    line-height: 46px;
    letter-spacing: 0.2px;
`

const StatusIcons = styled.div`
    display: flex;
    align-items: center;
    margin-top: 46px;
    height: 34px;
`

const Network = styled.div`
    margin: 3px 16px 0 14px;
    font-size: 32px;
    line-height: 34px;
`

const Battery = styled.div`
    display: flex;
    align-items: center;
    justify-content: center;
    width: 62px;
    height: 34px;
    border-radius: 11px;
    background: linear-gradient(to right, #fff 26.5px, #8d8d8f 26.5px);
    color: #121212;
    font-size: 29px;
    font-weight: 700;
    letter-spacing: -0.6px;
`

const BatteryCap = styled.div`
    width: 4px;
    height: 12px;
    margin-left: 1.5px;
    border-radius: 0 5px 5px 0;
    background: #8d8d8f;
`

const NavBar = styled.div`
    display: flex;
    align-items: center;
    position: relative;
    height: 82px;
    padding-left: 28px;
`

const Unread = styled.div`
    margin: 0 0 0 22px;
    width: 58.5px;
    font-size: 35px;
`

const Avatar = styled.div`
    width: 80px;
    height: 80px;
`

// Marker strokes lie over the contact name
const NameMark = styled.svg`
    position: absolute;
    left: 200px;
    top: 11px;
    width: 388px;
    height: 62px;
`

const VideoIcon = styled.svg`
    margin: 0 0 3px 503.5px;
    fill: none;
    stroke: #fff;
    stroke-width: 3;
    stroke-linejoin: round;
`

const PhoneIcon = styled.svg`
    margin: 0 0 3px 54.5px;
    fill: none;
    stroke: #fff;
    stroke-width: 3.1;
    stroke-linejoin: round;
`

const Chat = styled.section`
    display: flex;
    flex-direction: column;
    position: relative;
    flex: none;
    height: 1661.5px;
    overflow: hidden;
`

const WallpaperSvg = styled.svg`
    position: absolute;
    left: 0;
    top: 0;
    width: 944px;
    height: 1662px;
`

const DatePill = styled.div`
    position: relative;
    align-self: center;
    width: ${(p) => p.$width}px;
    height: 41.5px;
    margin-top: ${(p) => p.$top}px;
    flex: none;
    border-radius: 19px;
    background: #171717;
    font-size: 27.5px;
    font-weight: 600;
    line-height: 42px;
    letter-spacing: 0.75px;
    text-align: center;
`

const Bubble = styled.div`
    position: relative;
    flex: none;
    box-sizing: border-box;
    width: ${(p) => p.$width}px;
    margin-top: ${(p) => p.$gap}px;
    padding: 10.7px 20px 14.9px 20.5px;
    border-radius: 26px;
    background: #242626;
    margin-left: 36.5px;

    ${(p) => p.$out && css`
        align-self: flex-end;
        margin-left: 0;
        margin-right: 37px;
        background: #144d37;
    `}
`

const Line = styled.div`
    height: 48.35px;
    font-size: 36px;
    line-height: 48.35px;
    letter-spacing: ${(p) => p.$ls}px;
    white-space: nowrap;
`

const LastRow = styled.div`
    display: flex;
    justify-content: space-between;
    align-items: flex-end;
    height: ${(p) => (p.$short ? 37.8 : 48.35)}px;
`

const Meta = styled.div`
    display: flex;
    align-items: flex-end;
    gap: 9px;
    margin: 0 ${(p) => (p.$out ? 0 : 2.5)}px -2.5px 0;
    color: ${(p) => (p.$out ? '#84a698' : '#919393')};
    font-size: 25.3px;
    line-height: 26px;
    letter-spacing: -0.5px;
    font-variant-numeric: tabular-nums;

    svg {
        margin-bottom: 2px;
    }
`

const TailSvg = styled.svg`
    position: absolute;
    bottom: 0;
    ${(p) => (p.$out ? 'right: -13px;' : 'left: -13px; transform: scaleX(-1);')}
`

const Pushed = styled.span`
    display: inline-block;
    width: 478.5px;
    text-align: right;
`

const InkMark = styled.svg`
    position: absolute;
    left: -75px;
    top: -20.3px;
    width: 480px;
    height: 130px;
    z-index: 1;
`

const PhoneLink = styled.span`
    display: inline-block;
    width: 190px;
    height: 46px;
    box-sizing: border-box;
    border-bottom: 2.5px solid #37b469;
    color: #37b469;
    font-size: 37px;
    line-height: 49px;
`

const NumberMark = styled.svg`
    position: absolute;
    left: 37.5px;
    top: 51px;
    width: 270px;
    height: 60px;
`

const AfterMark = styled.span`
    padding-left: 126px;
`

const ChildMark = styled.svg`
    position: absolute;
    left: -16.5px;
    top: 58.3px;
    width: 176px;
    height: 50px;
`

const ForwardedBubble = styled.div`
    position: relative;
    flex: none;
    box-sizing: border-box;
    width: 541.5px;
    height: 120px;
    margin: 9.8px 0 0 36.5px;
    padding: 16px 8px 0;
    border-radius: 26px;
    background: #242626;
`

const ForwardedLabel = styled.div`
    display: flex;
    align-items: center;
    gap: 12.5px;
    height: 34px;
    padding-left: 14.5px;
    color: #8d8f8f;
    font-size: 28px;
    font-style: italic;
    letter-spacing: 0.1px;

    svg {
        margin-top: 1px;
    }
`

const ForwardedCard = styled.div`
    height: 90px;
    margin-top: 14.5px;
    border-radius: 20px;
    background: #1e1f1f;
`

const JumpButton = styled.button`
    display: flex;
    align-items: center;
    position: absolute;
    right: 0;
    top: 1489.5px;
    width: 118.5px;
    height: 89px;
    padding: 0 0 0 33.5px;
    border: 0;
    border-radius: 19px 0 0 19px;
    background: #262626;
`

const Footer = styled.footer`
    display: flex;
    flex-direction: column;
    align-items: center;
    flex: 1;
    background: #121212;
`

const Composer = styled.div`
    display: flex;
    align-items: center;
    box-sizing: border-box;
    width: 100%;
    margin-top: 15.7px;
    padding: 0 36.5px 0 29.5px;
`

const CameraIcon = styled.svg`
    fill: none;
    stroke: #fff;
    stroke-width: 3.3;
    stroke-linejoin: round;
`

const MicIcon = styled.svg`
    margin: 0 0 1px 41.5px;
    fill: none;
    stroke: #fff;
    stroke-width: 3.4;
    stroke-linecap: round;
`

const Field = styled.div`
    display: flex;
    align-items: center;
    justify-content: flex-end;
    box-sizing: border-box;
    width: 635px;
    height: 66px;
    margin: 0 40px 0 29.5px;
    padding-right: 25px;
    border: 1px solid #363636;
    border-radius: 33px;
    background: #2b2b2b;
`

const HomeIndicator = styled.div`
    width: 338px;
    height: 12px;
    margin-top: 61px;
    border-radius: 6px;
    background: #fff;
`
